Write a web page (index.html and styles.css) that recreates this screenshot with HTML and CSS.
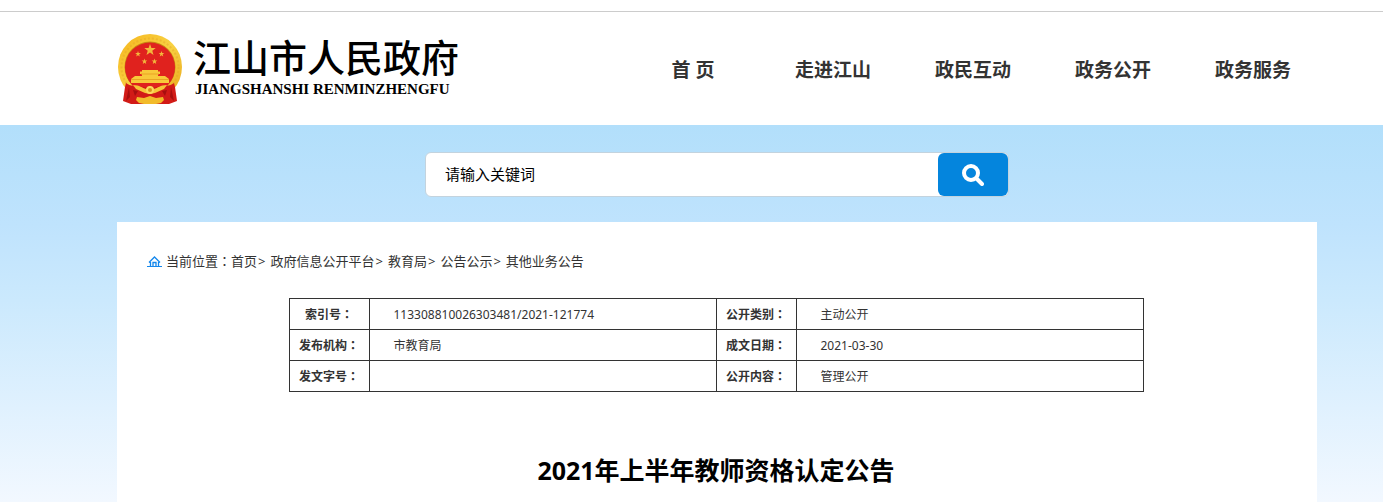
FILE: index.html
```html
<!DOCTYPE html>
<html lang="zh-CN">
<head>
    <meta charset="utf-8">
    <meta name="viewport" content="width=device-width, initial-scale=1">
    <title>2021年上半年教师资格认定公告</title>
    <link rel="stylesheet" href="styles.css">
</head>
<body>
    <header class="header">
        <a href="#" class="logo">
            <svg class="emblem" viewBox="0 0 66 70" aria-hidden="true">
                <defs>
                    <linearGradient id="gold" x1="0" y1="0" x2="1" y2="1">
                        <stop offset="0" stop-color="#f6b51c"/>
                        <stop offset="0.5" stop-color="#f8d243"/>
                        <stop offset="1" stop-color="#e9a61a"/>
                    </linearGradient>
                    <path id="star" d="M0-6 1.4-1.9 5.7-1.9 2.3.7 3.5 4.9 0 2.4-3.5 4.9-2.3.7-5.7-1.9-1.4-1.9z"/>
                </defs>
                <ellipse cx="33" cy="33" rx="32" ry="33" fill="url(#gold)"/>
                <circle cx="33" cy="33" r="28.500" fill="none" stroke="#e3a126" stroke-width="2" stroke-dasharray="2 2" opacity="0.4"/>
                <circle cx="33" cy="33" r="25.500" fill="#c98a14"/>
                <circle cx="33" cy="33.500" r="25" fill="#e0221e"/>
                <!-- stars -->
                <g fill="#f3b83c">
                    <use href="#star" transform="translate(33 16)"/>
                    <use href="#star" transform="translate(21 20) scale(.5)"/>
                    <use href="#star" transform="translate(44.500 20) scale(.5)"/>
                    <use href="#star" transform="translate(27.500 27.500) scale(.5)"/>
                    <use href="#star" transform="translate(37.500 27.500) scale(.5)"/>
                </g>
                <!-- gate -->
                <path fill="#f8c93a" d="M25 36h16v1.500h2V40h-2v2h7l4 3v4H14v-4l4-3h7v-2h-2v-2.500h2z"/>
                <path fill="#e9a425" d="M24 39.500h18v1H24zM14 45h38v1H14z"/>
                <!-- ribbon -->
                <path fill="#d21b17" d="M9 49c4 3 9 4 24 4s20-1 24-4l1 4 2 14-8 3H14l-8-3 2-14z"/>
                <path fill="#a80f0f" d="M12 53l-3 14 4-4zM54 53l3 14-4-4zM16 56l2 6 3-5zM50 56l-2 6-3-5z"/>
                <path fill="#f2bb2b" d="M20 63l7 1 6-2 6 2 7-1 1 3-3 3-5 1H27l-5-1-3-3z"/>
                <path fill="#f6c539" d="M16 51c7 0 9 3 13 4l4-3 4 3c4-1 6-4 13-4l-3 4-9 4-5 1-5-1-9-4z"/>
                <circle cx="33" cy="56" r="3" fill="#d99318" stroke="#fbd85b" stroke-width="2"/>
            </svg>
            <span class="logo-text">
                <span class="logo-name">江山市人民政府</span>
                <span class="logo-pinyin">JIANGSHANSHI RENMINZHENGFU</span>
            </span>
        </a>
        <nav class="nav">
            <a href="#">首 页</a>
            <a href="#">走进江山</a>
            <a href="#">政民互动</a>
            <a href="#">政务公开</a>
            <a href="#">政务服务</a>
        </nav>
    </header>

    <main class="main">
        <form class="search">
            <input type="text" class="search-input" value="请输入关键词" aria-label="请输入关键词">
            <button type="submit" class="search-button" aria-label="搜索">
                <svg width="22" height="22" viewBox="0 0 22 22" fill="none" stroke="#fff" aria-hidden="true">
                    <circle cx="9" cy="9" r="7" stroke-width="4"/>
                    <path d="M14.500 14.500l5.500 5.500" stroke-width="4" stroke-linecap="round"/>
                </svg>
            </button>
        </form>

        <div class="content">
            <div class="breadcrumb">
                <svg class="home-icon" width="15" height="11" viewBox="0 0 15 11" fill="none" stroke="#1487ec" aria-hidden="true">
                    <path d="M0 10.500h15" />
                    <path stroke-width="1.300" d="M2 6.500l5.500-5.500 5.500 5.500M3.500 6v4.500M11.500 6v4.500M6 10V6.500h3V10"/>
                </svg>
                <span>当前位置<span class="colon">：</span></span>
                <a href="#">首页</a><span class="arrow">&gt;</span>
                <a href="#">政府信息公开平台</a><span class="arrow">&gt;</span>
                <a href="#">教育局</a><span class="arrow">&gt;</span>
                <a href="#">公告公示</a><span class="arrow">&gt;</span>
                <a href="#">其他业务公告</a>
            </div>

            <table class="info">
                <tr>
                    <th scope="row">索引号<span class="colon">：</span></th>
                    <td>113308810026303481/2021-121774</td>
                    <th scope="row">公开类别<span class="colon">：</span></th>
                    <td>主动公开</td>
                </tr>
                <tr>
                    <th scope="row">发布机构<span class="colon">：</span></th>
                    <td>市教育局</td>
                    <th scope="row">成文日期<span class="colon">：</span></th>
                    <td>2021-03-30</td>
                </tr>
                <tr>
                    <th scope="row">发文字号<span class="colon">：</span></th>
                    <td></td>
                    <th scope="row">公开内容<span class="colon">：</span></th>
                    <td>管理公开</td>
                </tr>
            </table>

            <h1 class="title">2021年上半年教师资格认定公告</h1>
        </div>
    </main>
</body>
</html>
```
FILE: styles.css
```css
* {
    box-sizing: border-box;
}

body {
    margin: 0;
    min-height: 100vh;
    display: flex;
    flex-direction: column;
    padding-top: 11px;
    font-family: "Noto Sans", "Noto Sans CJK SC", sans-serif;
    font-size: 13px;
    color: #333;
    background: #fff;
}

a {
    color: inherit;
    text-decoration: none;
}

/* centered colon */
.colon {
    font-family: "Noto Sans CJK TC", sans-serif;
    font-feature-settings: "locl" 0;
    line-height: 1;
}

.header {
    display: flex;
    justify-content: space-between;
    align-items: center;
    height: 114px;
    padding: 0 92px 0 117px;
    border-top: 1px solid #ccc;
}

.logo {
    display: flex;
    align-items: center;
    gap: 10px;
    color: #000;
}

.emblem {
    width: 66px;
    height: 70px;
}

.logo-text {
    display: flex;
    flex-direction: column;
}

.logo-name {
    font-family: "Noto Sans CJK SC", serif;
    font-size: 38px;
    font-weight: 500;
    line-height: 48px;
}

.logo-pinyin {
    padding: 0 0 8px 2px;
    font-family: "Liberation Serif", serif;
    font-size: 15px;
    font-weight: bold;
    line-height: 18px;
}

.nav {
    display: flex;
    gap: 64px;
    padding-top: 2px;
}

.nav a {
    min-width: 76px;
    font-size: 19px;
    font-weight: bold;
    line-height: 28px;
    text-align: center;
}

.main {
    flex: 1;
    display: flex;
    flex-direction: column;
    padding: 27px 66px 0 117px;
    background: linear-gradient(#b2dffb, #bfe3fd 100px, #cbe9fd 175px, #f2f8ff 377px);
}

.search {
    display: flex;
    width: 584px;
    height: 45px;
    margin: 0 auto 25px;
    border: 1px solid #c3d3de;
    border-radius: 6px;
    background: #fff;
}

.search-input {
    flex: 1;
    min-width: 0;
    padding: 0 19px 2px;
    border: 0;
    outline: 0;
    background: none;
    font-family: inherit;
    font-size: 15px;
    color: #000;
}

.search-button {
    display: flex;
    justify-content: center;
    align-items: center;
    width: 70px;
    padding: 0;
    border: 0;
    border-radius: 6px;
    background: #0485dd;
    cursor: pointer;
}

.content {
    flex: 1;
    padding: 30px 32px 0 30px;
    background: #fff;
}

.breadcrumb {
    display: flex;
    align-items: center;
    line-height: 18px;
}

.home-icon {
    margin-right: 4px;
}

.arrow {
    margin-right: 5px;
    padding-left: 1px;
}

.info {
    width: 100%;
    max-width: 855px;
    margin: 28px auto 0;
    border-collapse: collapse;
    table-layout: fixed;
    font-size: 12px;
    line-height: 18px;
}

.info th,
.info td {
    height: 31px;
    padding: 2px 0 0;
    border: 1px solid #333;
}

.info th {
    width: 80px;
}

.info td {
    padding-left: 24px;
}

.title {
    margin: 60px 0 0;
    font-size: 25px;
    line-height: 36px;
    color: #000;
    text-align: center;
}
```
